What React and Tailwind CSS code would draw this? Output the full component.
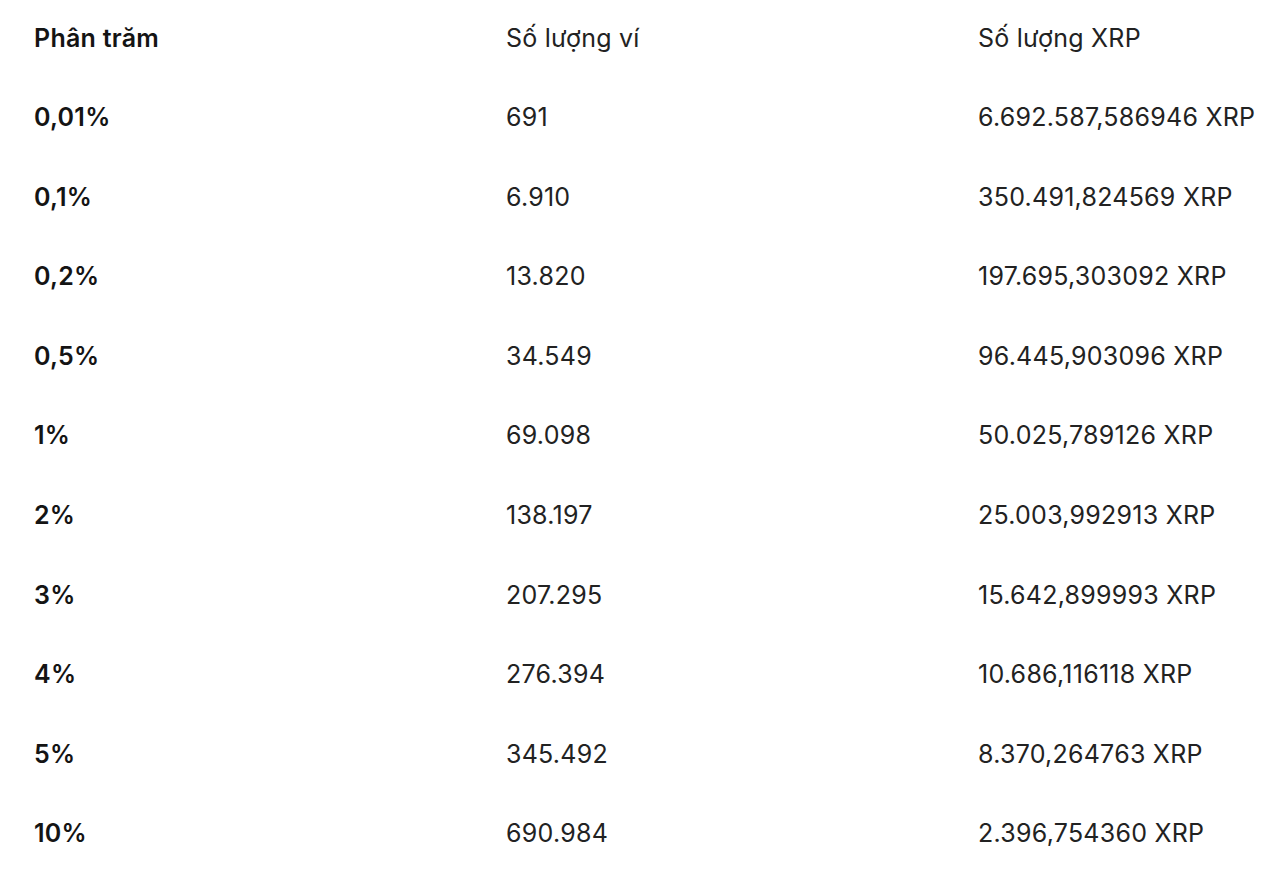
import React from "react";

const rows = [
  ["0,01%", "691", "6.692.587,586946 XRP"],
  ["0,1%", "6.910", "350.491,824569 XRP"],
  ["0,2%", "13.820", "197.695,303092 XRP"],
  ["0,5%", "34.549", "96.445,903096 XRP"],
  ["1%", "69.098", "50.025,789126 XRP"],
  ["2%", "138.197", "25.003,992913 XRP"],
  ["3%", "207.295", "15.642,899993 XRP"],
  ["4%", "276.394", "10.686,116118 XRP"],
  ["5%", "345.492", "8.370,264763 XRP"],
  ["10%", "690.984", "2.396,754360 XRP"],
];

export default function App() {
  return (
    <div
      className="w-[1280px] h-[891px] bg-white overflow-hidden pl-[34px]"
      style={{ fontFamily: "Inter, 'Noto Sans', sans-serif" }}
    >
      <div className="grid grid-cols-[472px_472px_1fr] h-[78px] items-center text-[25px] text-[#222] tracking-[0.25px]">
        <div className="font-semibold text-[#141414]">Phân trăm</div>
        <div>Số lượng ví</div>
        <div>Số lượng XRP</div>
      </div>
      {rows.map((r, i) => (
        <div
          key={i}
          className="grid grid-cols-[472px_472px_1fr] h-[79.6px] items-center text-[25px] text-[#222] tracking-[0.25px]"
        >
          <div className="font-semibold text-[#141414]">{r[0]}</div>
          <div>{r[1]}</div>
          <div>{r[2]}</div>
        </div>
      ))}
    </div>
  );
}
